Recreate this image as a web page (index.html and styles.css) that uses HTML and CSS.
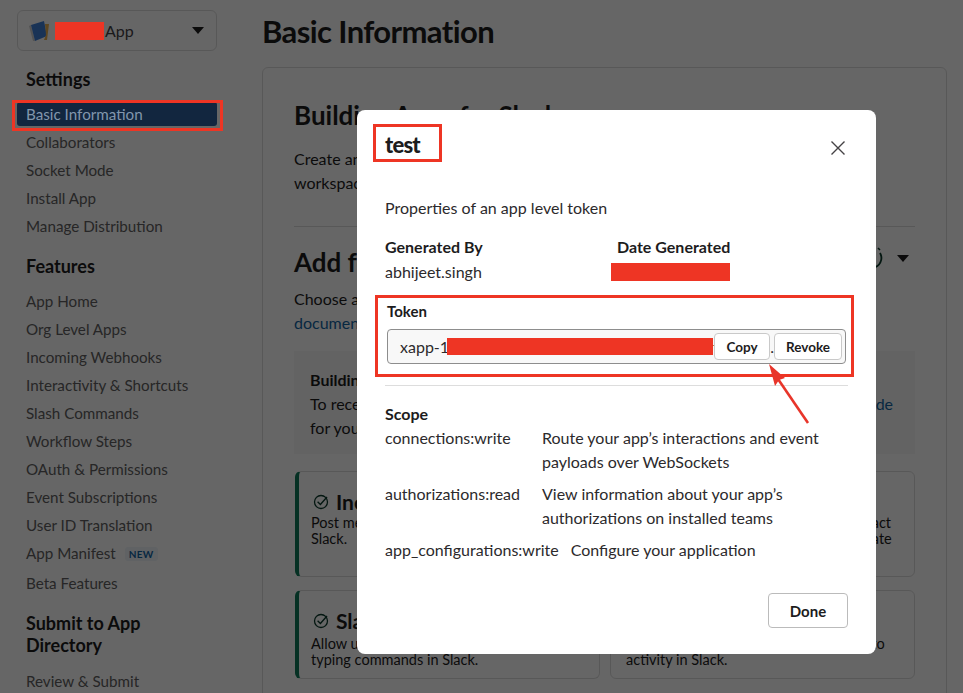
FILE: index.html
```html
<!DOCTYPE html>
<html lang="en">
<head>
    <meta charset="UTF-8">
    <meta name="viewport" content="width=device-width, initial-scale=1.0">
    <title>Basic Information</title>
    <link rel="stylesheet" href="styles.css">
</head>
<body>

<div class="page">
    <!-- Sidebar -->
    <aside class="sidebar">
        <div class="app-picker">
            <svg class="app-icon" width="22" height="22" viewBox="0 0 22 22">
                <path d="M1 6 L3 5 L7 21 L5 21 Z" fill="#d0d0d0"/>
                <path d="M3 5 L16 1 L19 16 L7 21 Z" fill="#3f80d8"/>
                <path d="M17 4 L21 4 L19 20 L16 20 L18 15 Z" fill="#e8b050"/>
            </svg>
            <span class="redact redact-app"></span>
            <span class="app-name">App</span>
            <span class="caret"></span>
        </div>

        <h3 class="side-title first">Settings</h3>
        <a class="side-link active">Basic Information</a>
        <a class="side-link">Collaborators</a>
        <a class="side-link">Socket Mode</a>
        <a class="side-link">Install App</a>
        <a class="side-link">Manage Distribution</a>

        <h3 class="side-title">Features</h3>
        <a class="side-link">App Home</a>
        <a class="side-link">Org Level Apps</a>
        <a class="side-link">Incoming Webhooks</a>
        <a class="side-link">Interactivity &amp; Shortcuts</a>
        <a class="side-link">Slash Commands</a>
        <a class="side-link">Workflow Steps</a>
        <a class="side-link">OAuth &amp; Permissions</a>
        <a class="side-link">Event Subscriptions</a>
        <a class="side-link">User ID Translation</a>
        <a class="side-link">App Manifest <span class="new-tag">NEW</span></a>
        <a class="side-link beta">Beta Features</a>

        <h3 class="side-title submit">Submit to App Directory</h3>
        <a class="side-link">Review &amp; Submit</a>
    </aside>

    <!-- Main content, behind the dialog -->
    <main class="main">
        <h1 class="page-title">Basic Information</h1>
        <div class="panel">
            <h2 class="panel-title">Building Apps for Slack</h2>
            <p class="panel-text">Create an app that’s just for your workspace or build one for any<br>workspace by distributing it in the Slack App Directory.</p>
            <hr class="panel-rule">

            <div class="feature-head">
                <h2 class="panel-title">Add features and functionality</h2>
                <svg class="head-check" width="18" height="22" viewBox="0 0 18 22">
                    <path d="M11 1 L13 3" fill="none" stroke="#0b3a2c" stroke-width="1.6"/>
                    <path d="M13 6 A9 9.5 0 0 1 6 20.5" fill="none" stroke="#0b3a2c" stroke-width="1.8"/>
                </svg>
                <span class="caret"></span>
            </div>
            <p class="panel-text feature-text">Choose and configure the tools you’ll need to create your app (or review all our<br><a class="doc-link">documentation</a>).</p>

            <div class="notice">
                <strong>Building an internal tool for your workspace?</strong>
                <p>To receive events over a WebSocket instead of a Request URL, enable <a class="doc-link">Socket Mode</a><br>for your app and use the token below to connect.</p>
            </div>

            <div class="feature-grid">
                <div class="feature on">
                    <h4><svg width="16" height="16" viewBox="0 0 16 16"><circle cx="8" cy="8" r="6.5" fill="none" stroke="#0b3a2c" stroke-width="1.3"/><path d="M4.6 7.8 L7.4 10.4 L14 3" fill="none" stroke="#0b3a2c" stroke-width="1.4"/></svg>Incoming Webhooks</h4>
                    <p>Post messages from external sources into<br>Slack.</p>
                </div>
                <div class="feature">
                    <h4>Interactive Components</h4>
                    <p>Add buttons to your message and interact<br>with users, so that they all can collaborate</p>
                </div>
                <div class="feature on low">
                    <h4><svg width="16" height="16" viewBox="0 0 16 16"><circle cx="8" cy="8" r="6.5" fill="none" stroke="#0b3a2c" stroke-width="1.3"/><path d="M4.6 7.8 L7.4 10.4 L14 3" fill="none" stroke="#0b3a2c" stroke-width="1.4"/></svg>Slash Commands</h4>
                    <p>Allow users to perform app actions by<br>typing commands in Slack.</p>
                </div>
                <div class="feature low">
                    <h4>Event Subscriptions</h4>
                    <p>Make it easier for your app to respond to<br>activity in Slack.</p>
                </div>
            </div>
        </div>
    </main>
</div>

<div class="scrim"></div>

<!-- Token dialog -->
<div class="modal">
    <div class="modal-head">
        <h2 class="modal-title">test</h2>
        <svg class="close" width="16" height="16" viewBox="0 0 16 16">
            <path d="M1.5 1.5 L14.5 14.5 M14.5 1.5 L1.5 14.5" stroke="#454245" stroke-width="1.4" fill="none"/>
        </svg>
    </div>

    <p class="modal-intro">Properties of an app level token</p>

    <div class="meta">
        <div class="meta-col">
            <div class="label">Generated By</div>
            <div class="value">abhijeet.singh</div>
        </div>
        <div class="meta-col date-col">
            <div class="label">Date Generated</div>
            <span class="redact redact-date"></span>
        </div>
    </div>

    <div class="token">
        <div class="label">Token</div>
        <div class="token-box">
            <span class="token-text">xapp-1</span>
            <span class="redact redact-token"></span>
            <span class="token-tail">t</span>
            <button class="mini-btn copy">Copy</button>
            <span class="token-tail gap">.a</span>
            <button class="mini-btn revoke">Revoke</button>
        </div>
    </div>

    <hr class="modal-rule">

    <div class="label scope-label">Scope</div>
    <div class="scope-row">
        <div class="scope-name">connections:write</div>
        <div class="scope-desc">Route your app’s interactions and event<br>payloads over WebSockets</div>
    </div>
    <div class="scope-row">
        <div class="scope-name">authorizations:read</div>
        <div class="scope-desc">View information about your app’s<br>authorizations on installed teams</div>
    </div>
    <div class="scope-row">
        <div class="scope-name">app_configurations:write</div>
        <div class="scope-desc">Configure your application</div>
    </div>

    <div class="modal-foot">
        <button class="done">Done</button>
    </div>
</div>

<!-- Red markup drawn over the screenshot -->
<div class="mark mark-nav"></div>
<div class="mark mark-title"></div>
<div class="mark mark-token"></div>
<svg class="mark-arrow" width="50" height="66" viewBox="0 0 50 66">
    <path d="M44 62 L14 18" stroke="#e8352a" stroke-width="2.6" fill="none"/>
    <path d="M5 3 L21 17 L15 19 L11 25 Z" fill="#e8352a"/>
</svg>

</body>
</html>
```

FILE: styles.css
```css
/* Global styling */
body {
    font-family: 'Lato', 'Liberation Sans', sans-serif;
    color: #1d1c1d;
    background-color: #ffffff;
    margin: 0;
    padding: 0;
    height: 693px;
    overflow: hidden;
}

.page {
    display: flex;
    height: 693px;
    overflow: hidden;
}

/* Redactions sit on top of the dimmed page */
.redact {
    display: inline-block;
    position: relative;
    z-index: 1;
    background-color: #ee3524;
}

.caret {
    display: block;
    flex: none;
    width: 0;
    height: 0;
    border-left: 6.5px solid transparent;
    border-right: 6.5px solid transparent;
    border-top: 7px solid #1d1c1d;
}

/* Sidebar */
.sidebar {
    flex: 0 0 262px;
    box-sizing: border-box;
    padding: 10px 0 0 17px;
}

.app-picker {
    display: flex;
    align-items: center;
    box-sizing: border-box;
    width: 200px;
    height: 41px;
    padding: 0 12px 0 10px;
    border: 1px solid #dddddd;
    border-radius: 6px;
    margin-bottom: 17px;
}

.app-icon {
    flex: none;
    margin-right: 5px;
}

.redact-app {
    width: 49px;
    height: 18px;
}

.app-name {
    font-size: 16px;
    margin-left: 1px;
    color: #454245;
}

.app-picker .caret {
    margin-left: auto;
}

.side-title {
    width: 170px;
    font-size: 18px;
    line-height: 22px;
    font-weight: 700;
    margin: 17px 0 12px 9px;
}

.side-title.first {
    margin-top: 0;
    margin-bottom: 12px;
}

.side-title.submit {
    margin: 17px 0 13px 9px;
}

.side-link {
    display: block;
    box-sizing: border-box;
    width: 200px;
    height: 24px;
    line-height: 24px;
    margin-bottom: 4px;
    padding-left: 9px;
    font-size: 15.2px;
    color: #616061;
    white-space: nowrap;
}

.side-link.active {
    position: relative;
    z-index: 1;
    background-color: #12263f;
    color: #8296ad;
    border-radius: 3px;
}

.side-link.beta {
    margin-top: 6px;
}

.new-tag {
    display: inline-block;
    font-size: 10px;
    line-height: 14px;
    font-weight: 700;
    letter-spacing: 0.3px;
    color: #1264a3;
    background-color: #f0f6fb;
    border-radius: 3px;
    padding: 0 4px;
    margin-left: 5px;
    vertical-align: 1px;
}

/* Main content */
.main {
    flex: 1;
    min-width: 0;
    padding-right: 16px;
}

.page-title {
    font-size: 31px;
    line-height: 40px;
    font-weight: 700;
    letter-spacing: -0.6px;
    margin: 11px 0 16px 0;
}

.panel {
    box-sizing: border-box;
    height: 640px;
    padding: 30px 31px 0 31px;
    border: 1px solid #dddddd;
    border-radius: 6px;
}

.panel-title {
    font-size: 26px;
    line-height: 34px;
    font-weight: 700;
    margin: 0;
    white-space: nowrap;
}

.panel-text {
    font-size: 16px;
    line-height: 24px;
    margin: 15px 0 0 0;
    white-space: nowrap;
    color: #1d1c1d;
}

.panel-rule {
    border: none;
    border-top: 1px solid #dddddd;
    margin: 31px 0 0 0;
}

.feature-head {
    display: flex;
    align-items: center;
    margin-top: 18px;
}

.head-check {
    margin: 0 12px 8px auto;
}

.feature-head .caret {
    margin: 0 6px 8px 0;
}

.feature-text {
    margin-top: 8px;
}

.doc-link {
    color: #1264a3;
}

.notice {
    box-sizing: border-box;
    height: 103px;
    margin-top: 16px;
    padding: 17px 16px 0 16px;
    background-color: #f8f8f8;
    font-size: 16px;
    line-height: 24px;
    white-space: nowrap;
}

.notice p {
    margin: 0;
}

.feature-grid {
    display: grid;
    grid-template-columns: 305px 305px;
    grid-template-rows: 106px 89px;
    gap: 13px 10px;
    margin-top: 17px;
    margin-left: 1px;
}

.feature {
    box-sizing: border-box;
    padding: 19px 15px 0 15px;
    border: 1px solid #dddddd;
    border-radius: 6px;
    overflow: hidden;
}

.feature.on {
    border-left: 4px solid #0f7a5a;
    padding-left: 12px;
}

.feature h4 {
    display: flex;
    align-items: center;
    gap: 7px;
    font-size: 21px;
    line-height: 22px;
    font-weight: 700;
    margin: 0 0 2px 2px;
    white-space: nowrap;
}

.feature.low h4 {
    margin-bottom: 4px;
}

.feature p {
    font-size: 14.5px;
    line-height: 16px;
    margin: 0;
    white-space: nowrap;
}

/* Dialog overlay */
.scrim {
    position: fixed;
    top: 0;
    left: 0;
    right: 0;
    bottom: 0;
    background-color: rgba(0, 0, 0, 0.6);
}

.modal {
    position: absolute;
    top: 110px;
    left: 357px;
    box-sizing: border-box;
    width: 519px;
    height: 544px;
    padding: 0 28px;
    background-color: #ffffff;
    border-radius: 8px;
    font-size: 16px;
    line-height: 24px;
    color: #2c2a2c;
}

.modal-head {
    display: flex;
    align-items: center;
    justify-content: space-between;
    height: 72px;
}

.modal-title {
    font-size: 22px;
    line-height: 28px;
    font-weight: 900;
    letter-spacing: -0.8px;
    color: #1d1c1d;
    margin: 0 0 2px 0;
}

.close {
    margin: 4px 2px 0 0;
}

.modal-intro {
    margin: 14px 0 0 0;
}

.meta {
    display: flex;
    margin-top: 15px;
}

.meta-col {
    width: 232px;
}

.date-col {
    width: auto;
}

.label {
    font-weight: 700;
    color: #1d1c1d;
}

.value {
    margin-top: 1px;
}

.redact-date {
    display: block;
    width: 119px;
    height: 18px;
    margin: 4px 0 0 -6px;
}

.token {
    margin: 15px 0 0 2px;
}

.token .label {
    font-size: 15px;
}

.token-box {
    display: flex;
    align-items: center;
    box-sizing: border-box;
    width: 459px;
    height: 35px;
    margin-top: 6px;
    padding-left: 12px;
    border: 1px solid #8d8d8d;
    border-radius: 4px;
    background-color: #f8f8f8;
    overflow: hidden;
}

.token-text {
    width: 47px;
    flex: none;
    white-space: nowrap;
}

.redact-token {
    flex: none;
    width: 266px;
    height: 17px;
}

.token-tail {
    width: 1px;
    overflow: hidden;
    flex: none;
}

.token-tail.gap {
    width: 4px;
    direction: rtl;
}

.mini-btn {
    flex: none;
    box-sizing: border-box;
    height: 27px;
    padding: 0;
    background-color: #ffffff;
    border: 1px solid #c9c9c9;
    border-radius: 4px;
    font-family: inherit;
    font-size: 13.5px;
    font-weight: 700;
    color: #1d1c1d;
}

.mini-btn.copy {
    width: 56px;
}

.mini-btn.revoke {
    width: 68px;
}

.modal-rule {
    border: none;
    border-top: 1px solid #dddddd;
    margin: 21px 0 0 0;
}

.scope-label {
    margin-top: 16px;
}

.scope-row {
    display: flex;
    gap: 12px;
    margin-bottom: 8px;
}

.scope-name {
    min-width: 145px;
    white-space: nowrap;
}

.scope-desc {
    white-space: nowrap;
}

.modal-foot {
    display: flex;
    justify-content: flex-end;
    margin-top: 31px;
}

.done {
    box-sizing: border-box;
    width: 80px;
    height: 35px;
    background-color: #ffffff;
    border: 1px solid #bbbbbb;
    border-radius: 4px;
    font-family: inherit;
    font-size: 15px;
    font-weight: 700;
    color: #1d1c1d;
}

/* Red annotations */
.mark {
    position: absolute;
    box-sizing: border-box;
    border: 3px solid #ee3524;
}

.mark-nav {
    z-index: 2;
    top: 100px;
    left: 12px;
    width: 211px;
    height: 31px;
}

.mark-title {
    top: 124px;
    left: 373px;
    width: 69px;
    height: 38px;
}

.mark-token {
    top: 295px;
    left: 375px;
    width: 479px;
    height: 82px;
}

.mark-arrow {
    position: absolute;
    top: 361px;
    left: 764px;
}
```
